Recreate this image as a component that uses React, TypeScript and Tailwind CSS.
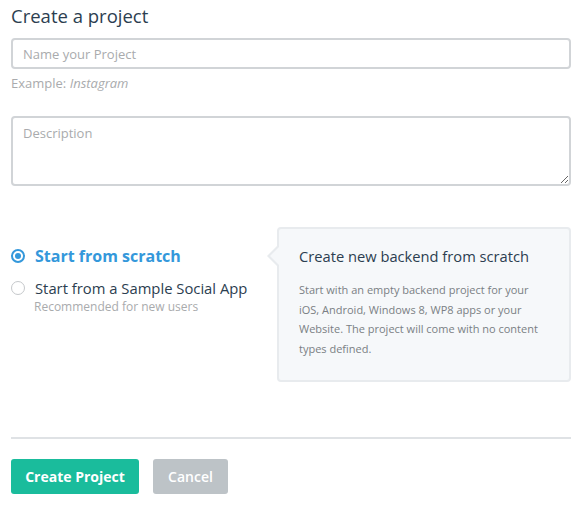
export default function App() {
  return (
    <main className="w-[584px] h-[505px] bg-white px-[11px] pt-[3px] font-['Open_Sans',sans-serif] text-[#2c3e50]">
      {/* Header */}
      <h1 className="text-[18.5px] leading-[26px]">Create a project</h1>

      {/* Name */}
      <input
        className="mt-[9px] block w-[560px] h-[31px] border-2 border-[#d1d4d7] rounded-[4px] px-[10px] text-[13px] outline-none placeholder:text-[#a9abad]"
        placeholder="Name your Project"
      />
      <p className="mt-[5px] text-[13px] leading-[18px] text-[#a9abad]">
        Example: <i>Instagram</i>
      </p>

      {/* Description */}
      <textarea
        className="mt-[24px] block w-[560px] h-[70px] border-2 border-[#d1d4d7] rounded-[4px] px-[10px] py-[6px] text-[13px] outline-none placeholder:text-[#a9abad]"
        placeholder="Description"
      />

      {/* Options */}
      <div className="mt-[41px] flex">
        <div className="w-[266px] pt-[18px]">
          <label className="flex items-center gap-[10px]">
            <span className="w-[14px] h-[14px] rounded-full border-2 border-[#3498db] flex items-center justify-center">
              <span className="w-[6px] h-[6px] rounded-full bg-[#3498db]" />
            </span>
            <span className="text-[16px] font-bold text-[#3498db] leading-[22px]">Start from scratch</span>
          </label>
          <label className="mt-[10px] flex items-center gap-[10px]">
            <span className="w-[14px] h-[14px] rounded-full border-[1.5px] border-[#c5c8cb]" />
            <span className="text-[14.8px] leading-[22px]">Start from a Sample Social App</span>
          </label>
          <p className="mt-[1px] ml-[23px] text-[12px] leading-[14px] text-[#a9abad]">Recommended for new users</p>
        </div>

        <div className="relative w-[294px] h-[155px] bg-[#f6f8fa] border-2 border-[#e8ebee] rounded-[4px] px-[20px] pt-[16px]">
          <span className="absolute left-[-12px] top-[15px] w-0 h-0 border-y-[12px] border-y-transparent border-r-[12px] border-r-[#e8ebee]" />
          <span className="absolute left-[-9px] top-[17px] w-0 h-0 border-y-[10px] border-y-transparent border-r-[10px] border-r-[#f6f8fa]" />
          <h2 className="text-[14.7px] leading-[22px]">Create new backend from scratch</h2>
          <p className="mt-[13px] text-[11px] leading-[19.5px] text-[#7a7f84]">
            Start with an empty backend project for your iOS, Android, Windows 8, WP8 apps or your Website. The project will come with no content types defined.
          </p>
        </div>
      </div>

      {/* Divider */}
      <hr className="mt-[55px] border-0 h-[2px] bg-[#dfe2e5] w-[560px]" />

      {/* Actions */}
      <div className="mt-[20px] flex gap-[14px]">
        <button className="w-[128px] h-[35px] rounded-[3px] bg-[#1abc9c] text-white text-[14px] font-bold">
          Create Project
        </button>
        <button className="w-[75px] h-[35px] rounded-[3px] bg-[#bdc3c7] text-white text-[14px] font-semibold">
          Cancel
        </button>
      </div>
    </main>
  );
}
